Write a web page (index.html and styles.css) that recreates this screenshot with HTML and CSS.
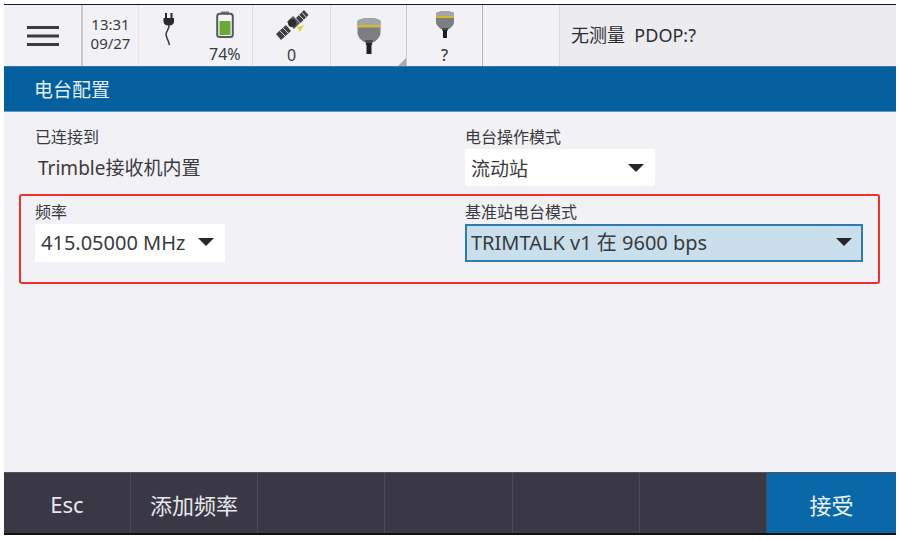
FILE: index.html
```html
<!DOCTYPE html>
<html lang="zh-CN">
<head>
<meta charset="utf-8">
<title>电台配置</title>
<link rel="stylesheet" href="styles.css">
</head>
<body>
<div class="screen">
  <header class="topbar">
    <div class="cell cell-menu">
      <svg width="34" height="24" viewBox="0 0 34 24"><path d="M1 3.500H33M1 12H33M1 20.500H33" stroke="#3c3c40" stroke-width="3"/></svg>
    </div>
    <div class="cell cell-time"><span>13:31</span><span>09/27</span></div>
    <div class="cell cell-power">
      <svg class="plug" width="14" height="34" viewBox="0 0 14 34"><path d="M4 0V5M9.500 0V5" stroke="#2a2a2c" stroke-width="2"/><path d="M1.500 5H12V8.500C12 11 10 12.500 6.800 12.500C3.500 12.500 1.500 11 1.500 8.500Z" fill="#2a2a2c"/><path d="M7 12C7.500 16 4.500 18 4 21C3.700 24 6.500 27 7.500 32" fill="none" stroke="#3c3c40" stroke-width="1.500"/></svg>
      <div class="battery-wrap">
        <svg width="18" height="27" viewBox="0 0 18 27"><rect x="5" y="0.500" width="8" height="3" fill="#77797a"/><rect x="1.200" y="2.700" width="15.600" height="23.300" rx="2.500" fill="#f2f3f4" stroke="#56595a" stroke-width="2"/><rect x="3.500" y="10" width="11" height="14" fill="#6aa93a"/></svg>
        <span class="small">74%</span>
      </div>
    </div>
    <div class="cell cell-sat">
      <svg width="34" height="32" viewBox="0 0 34 32"><path d="M1 25L11 16L16 22L6 31Z" fill="#3f4042"/><path d="M21 9L29 1L33.500 6L25.500 14Z" fill="#3f4042"/><path d="M5 22L10 27M8 19L13 24M24 6L29 11M27 3.500L31.500 8.500" stroke="#cfd0d2" stroke-width="1"/><path d="M12 13L18 7L25 14L19 20Z" fill="#55575a"/><circle cx="17" cy="14" r="4" fill="#2d2e30"/><path d="M22 18L29 16L25 23Z" fill="#e8d23c"/></svg>
      <span class="small">0</span>
    </div>
    <div class="cell cell-rover">
      <svg width="26" height="38" viewBox="0 0 26 38"><path d="M1.500 5C4 1 22 1 24.500 5V16C24.500 21 21 24 18 26H8C5 24 1.500 21 1.500 16Z" fill="#7c7e82"/><path d="M1.500 5C4 1 22 1 24.500 5V9H1.500Z" fill="#a2a4a6"/><rect x="1.500" y="9" width="23" height="2.500" fill="#cdb93a"/><path d="M9 24H17L16 29H10Z" fill="#4a4b4e"/><rect x="10.500" y="27" width="5" height="11" fill="#202124"/></svg>
      <span class="corner"></span>
    </div>
    <div class="cell cell-rover2">
      <svg width="20" height="28" viewBox="0 0 20 28"><path d="M1 3C3 0.500 17 0.500 19 3V12C19 15 16 17.500 14 19H6C4 17.500 1 15 1 12Z" fill="#7c7e82"/><path d="M1 3C3 0.500 17 0.500 19 3V6H1Z" fill="#a2a4a6"/><rect x="1" y="6" width="18" height="2" fill="#cdb93a"/><path d="M6.500 18H13.500L12.500 21H7.500Z" fill="#4a4b4e"/><rect x="8" y="20" width="4" height="8" fill="#202124"/></svg>
      <span class="small">?</span>
    </div>
    <div class="cell cell-empty"></div>
    <div class="status">无测量&nbsp;&nbsp;PDOP:?</div>
  </header>

  <div class="titlebar">电台配置</div>

  <main class="content">
    <div class="row-top">
      <div class="col col-left">
        <div class="label">已连接到</div>
        <div class="value">Trimble接收机内置</div>
      </div>
      <div class="col col-right">
        <div class="label">电台操作模式</div>
        <div class="select select-mode"><span>流动站</span><i class="arrow"></i></div>
      </div>
    </div>
    <section class="highlight">
      <div class="col col-left">
        <div class="label">频率</div>
        <div class="select select-freq"><span>415.05000 MHz</span><i class="arrow"></i></div>
      </div>
      <div class="col col-right">
        <div class="label">基准站电台模式</div>
        <div class="select select-radio"><span>TRIMTALK v1 在 9600 bps</span><i class="arrow"></i></div>
      </div>
    </section>
  </main>

  <footer class="softkeys">
    <div class="key">Esc</div>
    <div class="key">添加频率</div>
    <div class="key"></div>
    <div class="key"></div>
    <div class="key"></div>
    <div class="key"></div>
    <div class="key key-accept">接受</div>
  </footer>
</div>
</body>
</html>
```

FILE: styles.css
```css
* { box-sizing: border-box; }
html, body { margin: 0; padding: 0; background: #fff; }
body {
  width: 900px;
  height: 540px;
  overflow: hidden;
  padding: 4px 4px 0;
  font-family: "Noto Sans", "Noto Sans CJK SC", sans-serif;
  color: #3a3a3e;
}
.screen {
  width: 892px;
  height: 531px;
  display: flex;
  flex-direction: column;
  background: #f1f1f6;
  border-top: 1px solid #1c1c1e;
  border-bottom: 2px solid #111;
}
.topbar {
  height: 61px;
  display: flex;
  background: #f2f2f6;
}
.cell {
  position: relative;
  display: flex;
  flex-direction: column;
  align-items: center;
  border-right: 1px solid #dcdce0;
}
.cell-menu { width: 79px; justify-content: center; border-right: 2px solid #c8c8cc; padding-top: 1px; }
.cell-time { width: 56px; justify-content: center; font-size: 15px; line-height: 19px; color: #3a3a3e; border-right-color: #e4e4e8; padding-bottom: 3px; }
.cell-power { width: 114px; flex-direction: row; align-items: flex-start; padding-left: 23px; gap: 33px; }
.plug { margin-top: 8px; }
.battery-wrap { display: flex; flex-direction: column; align-items: center; padding-top: 6px; gap: 6px; }
.small { font-size: 16px; line-height: 20px; color: #3a3a3e; }
.cell-sat { width: 78px; padding-top: 4px; }
.cell-sat .small { margin-top: 4px; }
.cell-rover { width: 76px; padding-top: 11px; border-right: 1px solid #c8c8cc; }
.corner {
  position: absolute;
  right: 0;
  bottom: 0;
  width: 0;
  height: 0;
  border-left: 8px solid transparent;
  border-bottom: 8px solid #a9abae;
}
.cell-rover2 { width: 76px; padding-top: 5px; border-right: 1px solid #b4b4b8; }
.cell-rover2 .small { margin-top: 7px; font-weight: 500; }
.cell-empty { width: 77px; }
.status {
  flex: 1;
  background: #ecebf0;
  font-size: 18px;
  line-height: 24px;
  padding: 18px 0 0 11px;
  color: #2e2e32;
}
.titlebar {
  height: 46px;
  background: #045f9e;
  border-top: 1px solid #2f7cae;
  border-bottom: 1px solid #5b9ac6;
  color: #e4eef6;
  font-size: 19px;
  line-height: 47px;
  padding-left: 30px;
}
.content {
  flex: 1;
  padding: 15px 16px 0 15px;
}
.row-top { display: flex; padding-left: 16px; }
.col-left { width: 430px; }
.label { font-size: 16px; line-height: 20px; color: #3a3a3e; }
.value { font-size: 19px; line-height: 26px; margin-top: 8px; padding-left: 3px; color: #3a3a3e; }
.select {
  display: flex;
  align-items: center;
  justify-content: space-between;
  background: #fff;
  font-size: 20px;
  height: 37px;
  margin-top: 2px;
  padding: 0 11px 0 6px;
  color: #3a3a3e;
}
.select-mode { width: 190px; font-size: 19px; }
.select-freq { width: 190px; height: 38px; margin-top: 2px; padding-bottom: 2px; }
.select-radio {
  width: 398px;
  height: 38px;
  margin-top: 2px;
  background: #c9e0ec;
  border: 2px solid #2f7cb0;
  padding: 0 9px 3px 4px;
}
.arrow {
  width: 0;
  height: 0;
  border-left: 8px solid transparent;
  border-right: 8px solid transparent;
  border-top: 8px solid #26262c;
}
.highlight {
  display: flex;
  width: 861px;
  height: 90px;
  margin-top: 8px;
  padding: 6px 0 0 14px;
  border: 2px solid #f2302b;
  border-radius: 3px;
}
.softkeys {
  height: 61px;
  display: flex;
  background: #393844;
  border-top: 1px solid #55545e;
}
.key {
  width: 127.250px;
  display: flex;
  align-items: center;
  justify-content: center;
  color: #e8e8ec;
  font-size: 22px;
  border-right: 1px solid #4a4954;
  padding-top: 2px;
}
.key:first-child, .key:nth-child(2) { width: 127px; }
.key-accept {
  flex: 1;
  width: auto;
  background: #0b68a8;
  border-right: 0;
  color: #eaf3f9;
}
```
